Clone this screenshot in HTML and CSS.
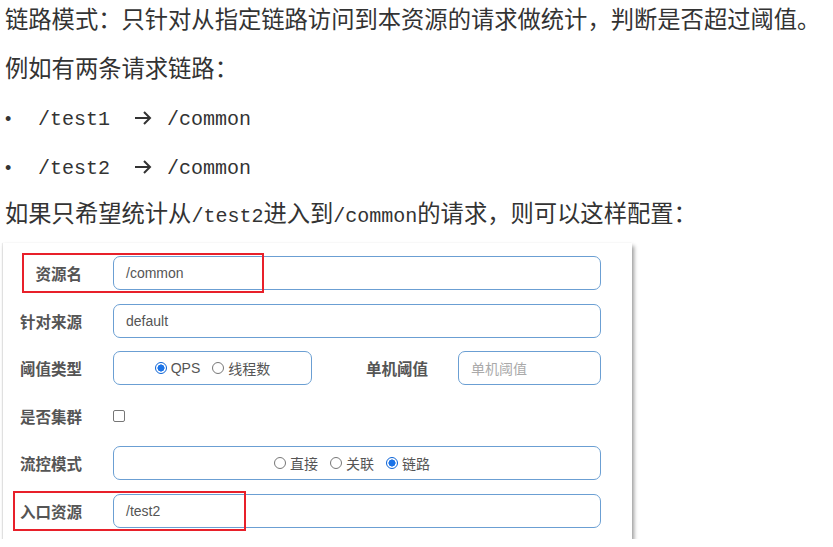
FILE: index.html
```html
<!DOCTYPE html>
<html lang="zh">
<head>
<meta charset="utf-8">
<link rel="stylesheet" href="styles.css">
</head>
<body>
<div class="doc">
  <p class="para">链路模式：只针对从指定链路访问到本资源的请求做统计，判断是否超过阈值。</p>
  <p class="para">例如有两条请求链路：</p>
  <p class="para bullet"><span class="dot">•</span><span class="mono">/test1</span><svg class="arrow" width="18" height="16" viewBox="0 0 18 16"><path d="M1 8H16M10 2L16 8L10 14" fill="none" stroke="#333" stroke-width="2"/></svg><span class="mono">/common</span></p>
  <p class="para bullet"><span class="dot">•</span><span class="mono">/test2</span><svg class="arrow" width="18" height="16" viewBox="0 0 18 16"><path d="M1 8H16M10 2L16 8L10 14" fill="none" stroke="#333" stroke-width="2"/></svg><span class="mono">/common</span></p>
  <p class="para">如果只希望统计从<span class="mono">/test2</span>进入到<span class="mono">/common</span>的请求，则可以这样配置：</p>
</div>
<div class="panel">
  <div class="row">
    <div class="label">资源名</div>
    <div class="input"><span class="val">/common</span></div>
  </div>
  <div class="row">
    <div class="label">针对来源</div>
    <div class="input"><span class="val">default</span></div>
  </div>
  <div class="row">
    <div class="label">阈值类型</div>
    <div class="split">
      <div class="input narrow center">
        <span class="radio on"></span><span class="rtext">QPS</span>
        <span class="radio"></span><span class="rtext">线程数</span>
      </div>
      <div class="label mid">单机阈值</div>
      <div class="input grow"><span class="ph">单机阈值</span></div>
    </div>
  </div>
  <div class="row">
    <div class="label">是否集群</div>
    <div class="checkcell"><span class="checkbox"></span></div>
  </div>
  <div class="row">
    <div class="label">流控模式</div>
    <div class="input center shift">
      <span class="radio"></span><span class="rtext">直接</span>
      <span class="radio"></span><span class="rtext">关联</span>
      <span class="radio on"></span><span class="rtext">链路</span>
    </div>
  </div>
  <div class="row">
    <div class="label">入口资源</div>
    <div class="input"><span class="val">/test2</span></div>
  </div>
  <div class="mark mark1"></div>
  <div class="mark mark2"></div>
</div>
</body>
</html>
```

FILE: styles.css
```css
html, body {
  margin: 0;
  padding: 0;
  background: #fff;
}
.doc {
  padding-left: 5px;
}
.para {
  margin: 0 0 11.5px 0;
  height: 37px;
  line-height: 37px;
  font-family: "Noto Sans CJK SC", "Liberation Serif", serif;
  font-size: 23.3px;
  color: #333;
  white-space: nowrap;
}
.mono {
  font-family: "Liberation Mono", "DejaVu Sans Mono", monospace;
  font-size: 20px;
}
.bullet .dot {
  display: inline-block;
  width: 33px;
  font-family: "Liberation Sans", sans-serif;
  font-size: 18px;
}
.bullet .arrow {
  display: inline-block;
  vertical-align: -1px;
  margin-left: 24px;
  margin-right: 15px;
}
.panel {
  position: relative;
  margin: 12px 0 0 3px;
  width: 598px;
  padding: 13px 31px 11px 0;
  box-shadow: 2px 3px 4px rgba(0,0,0,0.4), -1px 0 1px rgba(0,0,0,0.08);
  background: #fff;
  display: flex;
  flex-direction: column;
  gap: 13.6px;
}
.row {
  display: grid;
  grid-template-columns: 79px 1fr;
  column-gap: 31px;
  height: 34px;
  align-items: center;
}
.label {
  text-align: right;
  font-family: "Noto Sans CJK SC", sans-serif;
  font-weight: bold;
  font-size: 15.5px;
  color: #555;
  line-height: 34px;
}
.input {
  box-sizing: border-box;
  height: 34px;
  border: 1px solid #6b9fd3;
  border-radius: 7px;
  display: flex;
  align-items: center;
  padding-left: 12px;
  font-family: "Liberation Sans", "Noto Sans CJK SC", sans-serif;
  font-size: 14px;
  color: #555;
}
.split {
  display: flex;
  align-items: center;
  height: 34px;
}
.input.narrow {
  width: 199px;
  flex: none;
}
.label.mid {
  width: 116px;
  flex: none;
  margin-right: 30px;
}
.input.grow {
  flex: 1;
}
.center {
  justify-content: center;
  padding-left: 0;
}
.shift {
  padding-right: 10px;
}
.ph {
  color: #aaa;
  font-family: "Noto Sans CJK SC", sans-serif;
  font-size: 14px;
}
.rtext {
  margin-left: 4px;
  margin-right: 12px;
  font-family: "Liberation Sans", "Noto Sans CJK SC", sans-serif;
  font-size: 14px;
  color: #555;
}
.rtext:last-child {
  margin-right: 0;
}
.radio {
  box-sizing: border-box;
  width: 12px;
  height: 12px;
  border-radius: 50%;
  border: 1px solid #777;
  background: #fff;
  flex: none;
}
.radio.on {
  border-color: #0b63d6;
  background: radial-gradient(circle, #1a73e8 0 3.3px, #fff 3.8px 100%);
}
.checkcell {
  display: flex;
  align-items: center;
  height: 34px;
}
.checkbox {
  box-sizing: border-box;
  width: 12px;
  height: 12px;
  border: 1px solid #767676;
  border-radius: 2px;
  background: #fff;
}
.mark {
  position: absolute;
  border: 2px solid #e8202a;
  box-sizing: border-box;
}
.mark1 {
  left: 19px;
  top: 10px;
  width: 242px;
  height: 40px;
}
.mark2 {
  left: 10px;
  top: 248px;
  width: 233px;
  height: 40px;
}
```
